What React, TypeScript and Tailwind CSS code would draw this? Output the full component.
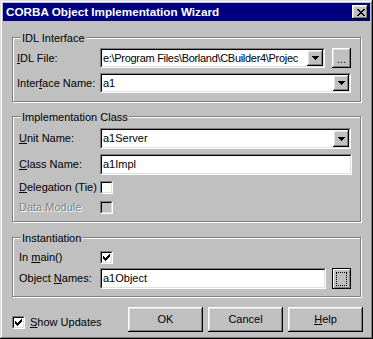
import React from "react";

// classic 3d frames
const RAISED =
  "shadow-[inset_-1px_-1px_0_#000,inset_1px_1px_0_#fff,inset_-2px_-2px_0_#808080,inset_2px_2px_0_#dfdfdf]";

const CLOSE_X = [
  "XX....XX",
  ".XX..XX.",
  "..XXXX..",
  "...XX...",
  "..XXXX..",
  ".XX..XX.",
  "XX....XX",
];

const ARROW = ["XXXXXXX", ".XXXXX.", "..XXX..", "...X..."];

const CHECK = [
  "......X",
  ".....XX",
  "X...XXX",
  "XX.XXX.",
  "XXXXX..",
  ".XXX...",
  "..X....",
];

const Pixels = ({ rows, className }: { rows: string[]; className?: string }) => (
  <svg
    width={rows[0].length}
    height={rows.length}
    className={className}
    shapeRendering="crispEdges"
  >
    {rows.flatMap((row, y) =>
      row.split("").map((c, x) =>
        c === "X" ? (
          <rect key={`${x}-${y}`} x={x} y={y} width={1} height={1} fill="currentColor" />
        ) : null
      )
    )}
  </svg>
);

const Sunken = ({
  className,
  children,
  bg = "bg-white",
}: {
  className: string;
  children?: React.ReactNode;
  bg?: string;
}) => (
  <div
    className={`shrink-0 border border-t-[#808080] border-l-[#808080] border-b-white border-r-white ${className}`}
  >
    <div
      className={`flex h-full w-full border border-t-black border-l-black border-b-[#dfdfdf] border-r-[#dfdfdf] ${bg}`}
    >
      {children}
    </div>
  </div>
);

const Combo = ({
  value,
  className,
  textClass = "",
}: {
  value: string;
  className: string;
  textClass?: string;
}) => (
  <Sunken className={className}>
    <div className={`flex flex-1 items-center overflow-hidden whitespace-nowrap pl-[1px] ${textClass}`}>
      {value}
    </div>
    <div className={`flex w-[16px] shrink-0 items-center justify-center bg-[#c0c0c0] ${RAISED}`}>
      <Pixels rows={ARROW} />
    </div>
  </Sunken>
);

const Edit = ({ value, className }: { value: string; className: string }) => (
  <Sunken className={className}>
    <div className="flex flex-1 items-center overflow-hidden whitespace-nowrap pl-[1px]">
      {value}
    </div>
  </Sunken>
);

const Check = ({ checked, disabled }: { checked?: boolean; disabled?: boolean }) => (
  <Sunken className="h-[13px] w-[13px]" bg={disabled ? "bg-[#c0c0c0]" : "bg-white"}>
    <div className="flex flex-1 items-center justify-center">
      {checked && <Pixels rows={CHECK} />}
    </div>
  </Sunken>
);

const Group = ({
  title,
  className,
  children,
}: {
  title: string;
  className: string;
  children: React.ReactNode;
}) => (
  <div
    className={`relative w-[349px] border border-[#808080] shadow-[inset_1px_1px_0_#fff,1px_1px_0_#fff] ${className}`}
  >
    <span className="absolute left-[8px] top-[-6px] bg-[#c0c0c0] px-[1px] leading-[13px]">
      {title}
    </span>
    {children}
  </div>
);

const Button = ({ children }: { children: React.ReactNode }) => (
  <button
    className={`flex h-[25px] w-[75px] items-center justify-center bg-[#c0c0c0] pb-[1px] ${RAISED}`}
  >
    {children}
  </button>
);

export default function App() {
  return (
    <div className="h-[339px] w-[373px] select-none bg-[#c0c0c0] p-[3px] font-['Liberation_Sans',Arial,sans-serif] text-[11px] leading-normal text-black shadow-[inset_-1px_-1px_0_#000,inset_1px_1px_0_#dfdfdf,inset_-2px_-2px_0_#808080,inset_2px_2px_0_#fff]">
      {/* Title bar */}
      <div className="flex h-[18px] items-center justify-between bg-[#000080] pl-[3px] pr-[2px]">
        <span className="text-[11.7px] font-bold text-white">CORBA Object Implementation Wizard</span>
        <div className={`flex h-[14px] w-[16px] items-center justify-center bg-[#c0c0c0] pl-[1px] pt-[1px] ${RAISED}`}>
          <Pixels rows={CLOSE_X} />
        </div>
      </div>

      <div className="pl-[9px]">
        {/* IDL Interface */}
        <Group title="IDL Interface" className="mt-[16px] h-[65px] pt-[10px]">
          <div className="flex h-[20px] items-center pl-[4px]">
            <span className="w-[83px] shrink-0">
              <u className="underline-offset-[1px]">I</u>DL File:
            </span>
            <Combo
              className="h-[20px] w-[225px]"
              textClass="tracking-[-0.3px]"
              value={"e:\\Program Files\\Borland\\CBuilder4\\Projec"}
            />
            <button className={`ml-[7px] flex h-[20px] w-[19px] items-end justify-center bg-[#c0c0c0] pb-[3px] leading-none ${RAISED}`}>
              ...
            </button>
          </div>
          <div className="mt-[5px] flex h-[20px] items-center pl-[4px]">
            <span className="w-[83px] shrink-0">
              Inter<u className="underline-offset-[1px]">f</u>ace Name:
            </span>
            <Combo className="h-[20px] w-[251px]" value="a1" />
          </div>
        </Group>

        {/* Implementation Class */}
        <Group title="Implementation Class" className="mt-[14px] h-[106px] pt-[11px]">
          <div className="flex h-[21px] items-center pl-[6px]">
            <span className="w-[81px] shrink-0">
              <u className="underline-offset-[1px]">U</u>nit Name:
            </span>
            <Combo className="h-[21px] w-[251px]" value="a1Server" />
          </div>
          <div className="mt-[5px] flex h-[21px] items-center pl-[6px]">
            <span className="w-[81px] shrink-0">
              <u className="underline-offset-[1px]">C</u>lass Name:
            </span>
            <Edit className="h-[21px] w-[252px]" value="a1Impl" />
          </div>
          <div className="mt-[6px] flex h-[13px] items-center pl-[6px]">
            <span className="w-[81px] shrink-0">
              <u className="underline-offset-[1px]">D</u>elegation (Tie)
            </span>
            <Check />
          </div>
          <div className="mt-[7px] flex h-[13px] items-center pl-[6px]">
            <span className="w-[81px] shrink-0 text-[#808080] [text-shadow:1px_1px_0_#fff]">
              Data Module
            </span>
            <Check disabled />
          </div>
        </Group>

        {/* Instantiation */}
        <Group title="Instantiation" className="mt-[15px] h-[60px] pt-[13px]">
          <div className="flex h-[13px] items-center pl-[6px]">
            <span className="w-[81px] shrink-0">
              In <u className="underline-offset-[1px]">m</u>ain()
            </span>
            <Check checked />
          </div>
          <div className="mt-[4px] flex h-[21px] items-center pl-[6px]">
            <span className="w-[81px] shrink-0">
              Object <u className="underline-offset-[1px]">N</u>ames:
            </span>
            <Edit className="h-[21px] w-[226px]" value="a1Object" />
            <button className="ml-[6px] flex h-[21px] w-[19px] items-center justify-center border border-black bg-[#c0c0c0] shadow-[inset_1px_1px_0_#fff,inset_-1px_-1px_0_#808080]">
              <span className="h-[14px] w-[11px] border border-dotted border-black" />
            </button>
          </div>
        </Group>

        {/* Bottom row */}
        <div className="mt-[10px] flex pr-[7px]">
          <div className="mt-[9px] flex h-[13px] items-center">
            <Check checked />
            <span className="ml-[5px]">
              <u className="underline-offset-[1px]">S</u>how Updates
            </span>
          </div>
          <div className="ml-auto flex gap-[5px]">
            <Button>OK</Button>
            <Button>Cancel</Button>
            <Button>
              <span>
                <u className="underline-offset-[1px]">H</u>elp
              </span>
            </Button>
          </div>
        </div>
      </div>
    </div>
  );
}
